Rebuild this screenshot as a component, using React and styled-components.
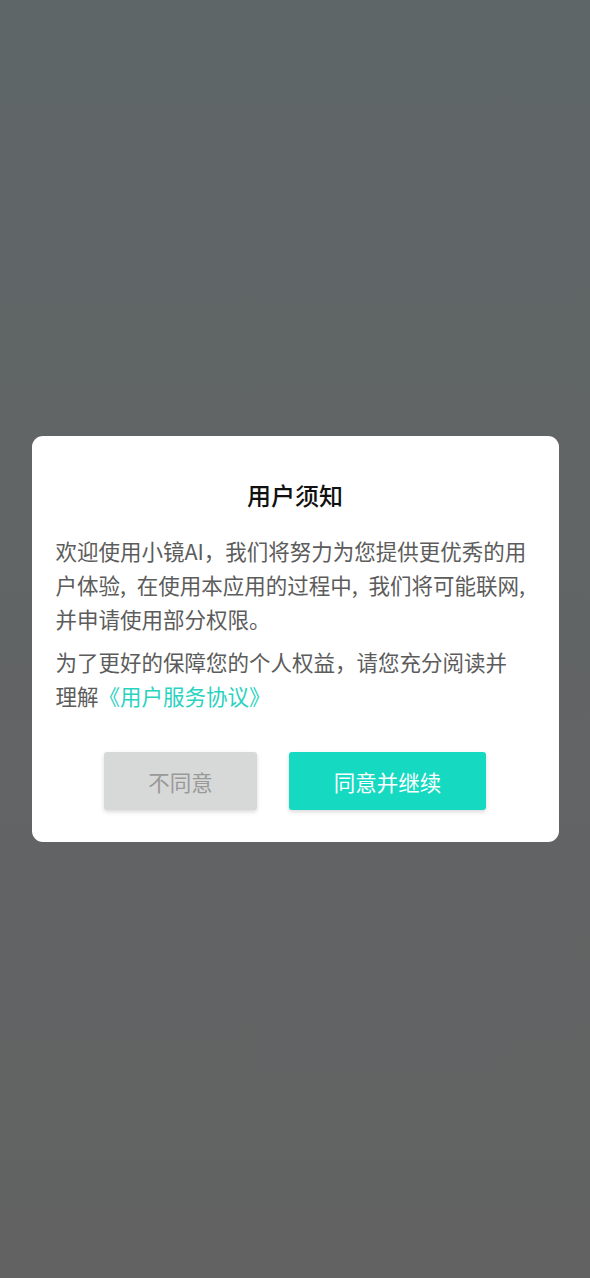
import React from 'react'
import styled, { createGlobalStyle } from 'styled-components'

const GlobalStyle = createGlobalStyle`
	html, body {
		margin: 0;
		padding: 0;
	}
	body {
		font-family: "Noto Sans CJK SC", "Noto Sans", sans-serif;
	}
`;

const Overlay = styled.div`
	width: 100%;
	min-height: 100vh;
	display: flex;
	align-items: center;
	justify-content: center;
	background: linear-gradient(180deg, #5f6667 0%, #616465 50%, #626262 100%);
`;

const Dialog = styled.div`
	width: 527px;
	box-sizing: border-box;
	padding: 42px 24px 32px;
	background-color: #fff;
	border-radius: 11px;
`;

const Title = styled.h2`
	margin: 0 0 22px;
	font-size: 24px;
	font-weight: 500;
	line-height: 34px;
	text-align: center;
	color: #111;
`;

const Paragraph = styled.p`
	margin: 0 0 ${props => props.gap || 0}px;
	font-size: 21.5px;
	line-height: 34px;
	color: #5c5c5c;
	white-space: nowrap;
`;

const Link = styled.span`
	color: #2ad2c0;
`;

const ButtonRow = styled.div`
	margin-top: 39px;
	display: flex;
	justify-content: center;
	gap: 32px;
`;

const Button = styled.button`
	width: ${props => props.width}px;
	height: 58px;
	border: none;
	border-radius: 3px;
	font-family: "Noto Sans CJK SC", "Noto Sans", sans-serif;
	font-size: 21.5px;
	background-color: ${props => props.primary ? '#15d9c1' : '#d7d8d8'};
	color: ${props => props.primary ? '#fff' : '#999'};
	box-shadow: 0 2px 4px rgba(0, 0, 0, 0.15);
`;

const App = () => {
	return (
		<>
			<GlobalStyle />
			<Overlay>
				<Dialog>
					<Title>用户须知</Title>
					<Paragraph gap={9}>
						欢迎使用小镜AI，我们将努力为您提供更优秀的用<br />
						户体验,{'\u2002'}在使用本应用的过程中,{'\u2002'}我们将可能联网,<br />
						并申请使用部分权限。
					</Paragraph>
					<Paragraph>
						为了更好的保障您的个人权益，请您充分阅读并<br />
						理解<Link>《用户服务协议》</Link>
					</Paragraph>
					<ButtonRow>
						<Button width={153}>不同意</Button>
						<Button width={197} primary>同意并继续</Button>
					</ButtonRow>
				</Dialog>
			</Overlay>
		</>
	)
}

export default App
